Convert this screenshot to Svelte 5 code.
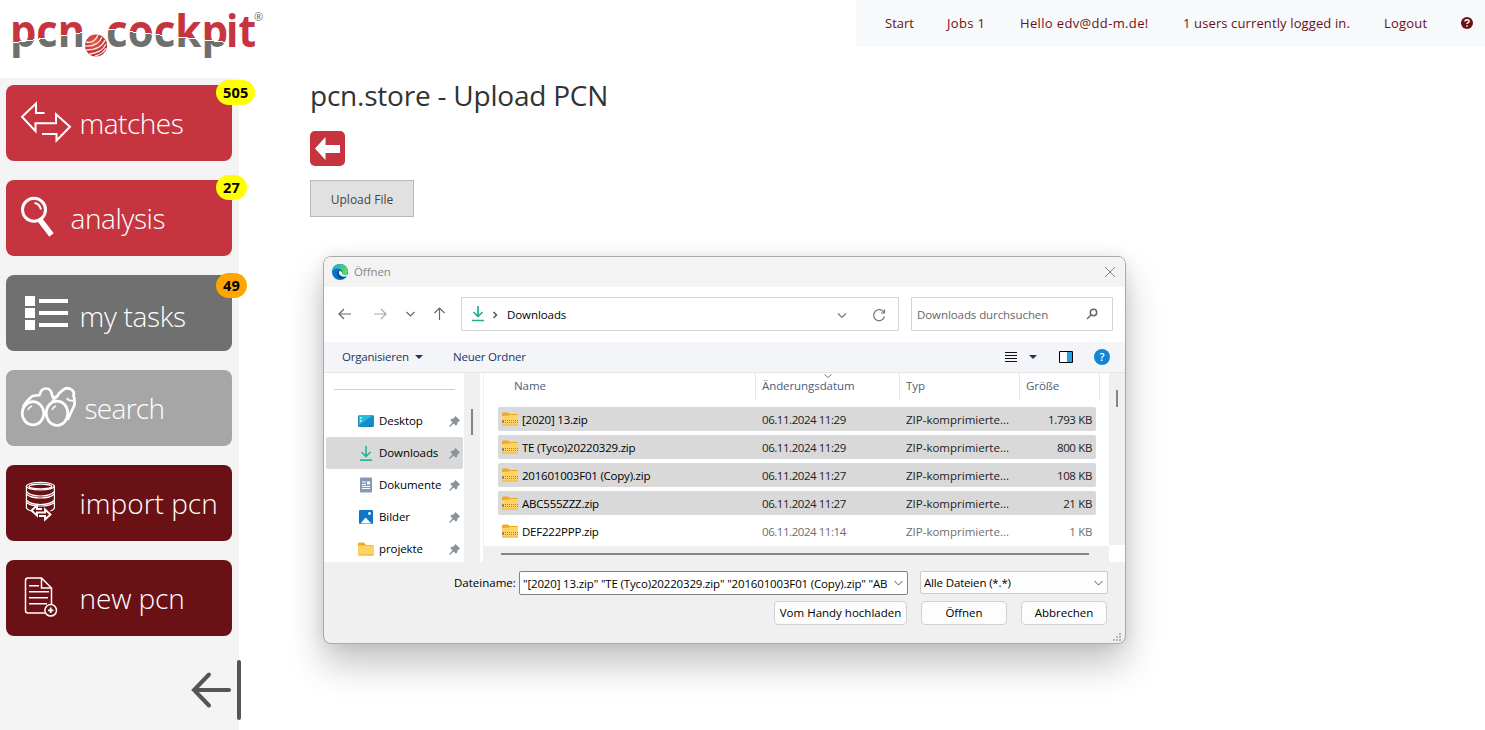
<script>
	const menu = [
		{ name: 'matches', icon: 'arrows', color: 'red', badge: 505, indent: 73.5, spacing: -0.5 },
		{ name: 'analysis', icon: 'lens', color: 'red', badge: 27, indent: 64.5, spacing: -0.4 },
		{ name: 'my tasks', icon: 'tasks', color: 'dark', badge: 49, indent: 73.5, spacing: -0.3 },
		{ name: 'search', icon: 'binoculars', color: 'light', indent: 78.5, spacing: -0.7 },
		{ name: 'import pcn', icon: 'database', color: 'wine', indent: 73.5, spacing: 0 },
		{ name: 'new pcn', icon: 'document', color: 'wine', indent: 73.5, spacing: -0.1 }
	];

	const places = [
		{ name: 'Desktop', icon: 'desktop' },
		{ name: 'Downloads', icon: 'download', active: true },
		{ name: 'Dokumente', icon: 'doc' },
		{ name: 'Bilder', icon: 'image' },
		{ name: 'projekte', icon: 'folder' }
	];

	let files = [
		{ name: '[2020] 13.zip', date: '06.11.2024 11:29', size: '1.793 KB', selected: true },
		{ name: 'TE (Tyco)20220329.zip', date: '06.11.2024 11:29', size: '800 KB', selected: true },
		{ name: '201601003F01 (Copy).zip', date: '06.11.2024 11:27', size: '108 KB', selected: true },
		{ name: 'ABC555ZZZ.zip', date: '06.11.2024 11:27', size: '21 KB', selected: true },
		{ name: 'DEF222PPP.zip', date: '06.11.2024 11:14', size: '1 KB', selected: false }
	];

	function toggle(file) {
		file.selected = !file.selected;
		files = files;
	}
</script>

<header>
	<svg class="logo" width="280" height="78" viewBox="0 0 280 78">
		<defs>
			<linearGradient id="cutLeft" gradientUnits="userSpaceOnUse" x1="44.1" y1="18.2" x2="49.9" y2="57.8">
				<stop offset="48.500%" stop-color="#c5343f" />
				<stop offset="48.500%" stop-color="#fff" />
				<stop offset="51%" stop-color="#fff" />
				<stop offset="51%" stop-color="#6f6f6e" />
			</linearGradient>
			<linearGradient id="cutRight" gradientUnits="userSpaceOnUse" x1="170.2" y1="16.1" x2="165.8" y2="55.9">
				<stop offset="48.500%" stop-color="#c5343f" />
				<stop offset="48.500%" stop-color="#fff" />
				<stop offset="51%" stop-color="#fff" />
				<stop offset="51%" stop-color="#6f6f6e" />
			</linearGradient>
			<radialGradient id="ball" cx="40%" cy="35%" r="65%">
				<stop offset="0%" stop-color="#e0634f" />
				<stop offset="100%" stop-color="#b3202b" />
			</radialGradient>
		</defs>
		<text x="10" y="46.500" textLength="75" lengthAdjust="spacingAndGlyphs" fill="url(#cutLeft)">pcn</text>
		<text x="106" y="46.500" textLength="122" lengthAdjust="spacingAndGlyphs" fill="url(#cutRight)">cockp</text>
		<text x="226" y="46.500" textLength="30" lengthAdjust="spacingAndGlyphs" fill="#c5343f">it</text>
		<circle cx="96" cy="45.500" r="11" fill="url(#ball)" />
		<g fill="none" stroke="#fbe3dc" stroke-width="1.400">
			<path d="M86 42q8 2 12-7" />
			<path d="M85 46q13 1 17-9" />
			<path d="M86 50q15 0 19-10" />
			<path d="M89 54q13-1 17-10" />
			<path d="M95 56q8-2 11-8" />
		</g>
		<text class="reg" x="254" y="21">®</text>
	</svg>
	<nav>
		<a class="start" href="#start">Start</a>
		<a class="jobs" href="#jobs">Jobs 1</a>
		<a class="hello" href="#account">Hello edv@dd-m.de!</a>
		<a class="users" href="#users">1 users currently logged in.</a>
		<a class="logout" href="#logout">Logout</a>
		<svg width="12" height="12" viewBox="0 0 12 12">
			<circle cx="6" cy="6" r="6" fill="#691115" />
			<path d="M4 4.600q0-1.800 2-1.800t2 1.600q0 1-1.200 1.500-.8.4-.8 1.200M6 8.200v1.500" fill="none" stroke="#fff" stroke-width="1.500" />
		</svg>
	</nav>
</header>

<div class="page">
	<aside>
		{#each menu as item}
			<div class="item {item.color}">
				<svg width={item.indent} height="76" fill="none" stroke="#fff" stroke-width="2">
					{#if item.icon === 'arrows'}
						<path d="M38.500 28H30v-9.500L16 31.700l13.500 14.500v-8H50v-9l14 12.500L50.500 55.500V49H36" />
					{:else if item.icon === 'lens'}
						<circle cx="28" cy="29.700" r="11.500" stroke-width="3" />
						<path d="M28.500 23q5 .5 6.500 6.500" stroke-width="2" />
						<path d="M34 40l11.500 15" stroke-width="5.500" />
						<path d="M33 38.500l3 4" stroke-width="3" />
					{:else if item.icon === 'tasks'}
						<path d="M19 26h10M19 38h10M19 50h10" stroke-width="10" />
						<path d="M33 26h29M33 38h29M33 50h29" stroke-width="4" />
					{:else if item.icon === 'binoculars'}
						<g stroke-width="2.700">
							<ellipse cx="27" cy="43.300" rx="10.800" ry="11.600" />
							<ellipse cx="51" cy="43.300" rx="10.800" ry="12.200" />
							<path d="M17 37q4-7 9.500-11l7-1q1.500-6.500 6.500-6.500 5 0 6 6.500l1 2.500 4-1q2-4 6-6.500 4-3.500 9 0 3 2.500 1.500 6l1 3v6L61.500 50" />
							<path d="M46 31l5-4M61 28q1 3 6 2.500" stroke-width="1.800" />
						</g>
						<path d="M22 40q1-3 4-4M46 40q1-3 4-4" stroke-width="1.500" />
					{:else if item.icon === 'database'}
						<g stroke-width="1.200">
							<ellipse cx="34.400" cy="21.200" rx="14" ry="3.800" />
							<ellipse cx="34.400" cy="21.500" rx="11.500" ry="2.400" />
							<path d="M20.400 21v22q1 2 5 3M48.400 21v22q-1 2-4 3M20.400 26.500q4 4.500 14 4.500t14-4.500M20.400 29q4 4 14 4t14-4M20.400 35q4 4.500 14 4.500t14-4.500M20.400 37.500q4 3.500 14 3.500t14-3.500" />
						</g>
						<path d="M36 44h-5v-3.500l-5.500 5 5.500 5V47.500h8v-3l5.500 5-5.500 5V51h-6" stroke-width="1.900" />
					{:else}
						<g stroke-width="1.500">
							<path d="M39 53H22q-2.500 0-2.500-2.500V20.500q0-2.500 2.500-2.500h13.500L45.500 28v16M35.500 18v10h10" />
							<path d="M23 25.700h10M23 31.700h20M23 37.700h19M23 43.700h18" />
							<circle cx="44.700" cy="50.300" r="5.800" />
							<path d="M42 50.300h5.400M44.700 47.600v5.400" stroke-width="1.800" />
						</g>
					{/if}
				</svg>
				<span class="name" class:lower={item.icon === 'tasks'} style="letter-spacing: {item.spacing}px">{item.name}</span>
				{#if item.badge}
					<b class="badge" class:orange={item.icon === 'tasks'}>{item.badge}</b>
				{/if}
			</div>
		{/each}
		<svg class="collapse" width="52" height="62" fill="none" stroke="#555" stroke-width="4" stroke-linecap="round">
			<path d="M39 31H4M19 15.500L4 31l15 15.500" />
			<path d="M49 3v56" />
		</svg>
	</aside>

	<main>
		<h1>pcn.store - Upload PCN</h1>
		<button class="back" aria-label="back">
			<svg width="35" height="35"><path d="M5 17.500L15.500 6v8H30v8H15.500v7z" fill="#fff" /></svg>
		</button>
		<button class="upload">Upload File</button>

		<section class="dialog">
			<div class="title">
				<svg width="16" height="16" viewBox="0 0 16 16">
					<defs>
						<linearGradient id="edgeTop" x1="0" y1="0" x2="1" y2="0.400">
							<stop offset="0" stop-color="#1aa5dc" />
							<stop offset="1" stop-color="#5bdb57" />
						</linearGradient>
					</defs>
					<circle cx="8" cy="8" r="8" fill="#0c71c9" />
					<path d="M0 7.500C.5 3 4 0 8 0c5 0 8 3.500 8 7 0 2.500-2 4-4 4s-3-1-2-2c1-2-1-4.500-4-4.500-3 0-5 1.500-6 3z" fill="url(#edgeTop)" />
					<path d="M6 7q-2 4 1 7 4 2 8-2-5 2-7.500-.5Q6 9.500 7.500 7z" fill="#0b4a91" />
					<path d="M7.500 7q2-.5 2.500 1.500c-.8 1.500.5 2.500 2.500 2.500 1.300 0 2.500-.5 3-1l-.5 2q-4 1.500-6.500-.5T7.500 7z" fill="#f3f3f3" />
				</svg>
				<span>Öffnen</span>
				<svg class="close" width="12" height="12"><path d="M1 1l10 10M11 1L1 11" fill="none" stroke="#888" /></svg>
			</div>

			<div class="address">
				<svg class="history" width="124" height="20" fill="none" stroke="#666" stroke-width="1.200">
					<path d="M16 10H4M9 5l-5 5 5 5" />
					<path d="M39 10h12M46 5l5 5-5 5" stroke="#aaa" />
					<path d="M71.500 8l4 4 4-4" />
					<path d="M104.500 16V4M99.500 9l5-5 5 5" />
				</svg>
				<div class="path">
					<svg width="36" height="20" fill="none">
						<path d="M7 2v10M2.500 8L7 12.500 11.500 8M1 16.500h12" stroke="#21b094" stroke-width="1.700" />
						<path d="M22.500 8l3 3-3 3" stroke="#555" stroke-width="1.500" />
					</svg>
					<span>Downloads</span>
					<svg class="tools" width="52" height="20" fill="none" stroke="#777" stroke-width="1.200">
						<path d="M1 9.500l4 4 4-4" />
						<path d="M47 8.500a5.500 5.500 0 1 0 .5 4M47.500 5.500V9H44" />
					</svg>
				</div>
				<div class="find">
					<span>Downloads durchsuchen</span>
					<svg width="12" height="12" fill="none" stroke="#666"><circle cx="7.500" cy="4.500" r="3.200" stroke-width="1.500" /><path d="M5 7L1 11" stroke-width="1.500" /></svg>
				</div>
			</div>

			<div class="toolbar">
				<span class="organise">Organisieren</span>
				<i class="caret"></i>
				<span class="newfolder">Neuer Ordner</span>
				<svg class="view" width="12" height="12"><path d="M0 1.500h12M0 4.500h12M0 7.500h12M0 10.500h12" stroke="#111" /></svg>
				<i class="caret"></i>
				<svg class="pane" width="14" height="12">
					<path d="M.500.500h13v11H.500z" fill="#fff" stroke="#000" />
					<path d="M8 1h5v10H8z" fill="#22a0e4" />
				</svg>
				<span class="help">?</span>
			</div>

			<div class="body">
				<div class="places">
					<hr />
					{#each places as place}
						<div class="place" class:active={place.active}>
							<svg width="16" height="16" viewBox="0 0 16 16" fill="none">
								{#if place.icon === 'desktop'}
									<rect y="2" width="16" height="12" rx="1.500" fill="#148fc6" />
									<path d="M1 2h14L1 12z" fill="#28bedb" />
									<path d="M2 5h1.500M2 8h1.500" stroke="#fff" stroke-width="1.500" />
									<path d="M11 13h4" stroke="#064979" stroke-dasharray="1 1" />
								{:else if place.icon === 'download'}
									<path d="M8 1v10.500M3.500 7L8 11.500 12.500 7M2 15.200h12" stroke="#2cb693" stroke-width="1.700" />
								{:else if place.icon === 'doc'}
									<rect x="2" y="0.500" width="12" height="15" rx="1" fill="#839bb8" />
									<path d="M4 5h4M4 7.500h4M4 9.500h8M4 11.500h8" stroke="#fff" />
									<path d="M9 4.500h3v3H9z" fill="#fff" />
								{:else if place.icon === 'image'}
									<rect x="1" y="1" width="14" height="14" rx="1.300" fill="#1175c5" />
									<path d="M2.500 14.500L7.500 8.500l6 6z" fill="#fff" />
									<circle cx="11.500" cy="4.500" r="1.400" fill="#fff" />
								{:else}
									<path d="M0 3q0-1.500 1.500-1.500H6L8 4h6.500Q16 4 16 5.500V8H0z" fill="#efa91b" />
									<rect y="4.500" width="16" height="10" rx="1" fill="#ffd264" />
									<path d="M.5 14h15" stroke="#e9b143" />
								{/if}
							</svg>
							<span>{place.name}</span>
							<svg class="pin" width="11" height="11" viewBox="0 0 11 11"><path d="M6.500 0L11 4.500 8.500 6.500 8 9 6.500 9.500 4.700 7.500.800 11 0 10.200 3.500 6.300 1.500 4.500 2 3l2.500-.500z" fill="#89939d" /></svg>
						</div>
					{/each}
				</div>
				<div class="vscroll left"><i></i></div>
				<div class="list">
					<div class="columns">
						<span>Name</span>
						<span>Änderungsdatum
							<svg width="8" height="4"><path d="M.500.500L4 3.500 7.500.500" fill="none" stroke="#777" /></svg>
						</span>
						<span>Typ</span>
						<span>Größe</span>
					</div>
					<div class="rows">
						{#each files as file}
							<!-- svelte-ignore a11y-click-events-have-key-events a11y-no-static-element-interactions -->
							<div class="row" class:selected={file.selected} on:click={() => toggle(file)}>
								<svg width="16" height="14" viewBox="0 0 16 14" fill="none">
									<path d="M0 2q0-1.500 1.500-1.500H6L7.500 2H15q1 0 1 1v4H0z" fill="#f0a81c" />
									<path d="M0 4l7-.5L8 3h8v9.500q0 1-1 1H1q-1 0-1-1z" fill="#ffd366" />
									<path d="M0 13h16" stroke="#eab347" />
									<path d="M1 8.500h15M1 10.500h15" stroke="#8b8678" stroke-dasharray="1 1" />
									<path d="M0 9.500h16" stroke="#d9d4c5" />
									<path d="M1 8v3" stroke="#888" stroke-width="2" />
								</svg>
								<span class="file">{file.name}</span>
								<span class="date">{file.date}</span>
								<span class="type">ZIP-komprimierte...</span>
								<span class="size">{file.size}</span>
							</div>
						{/each}
					</div>
					<div class="hscroll"><i></i></div>
				</div>
				<div class="vscroll right"><i></i></div>
			</div>

			<div class="footer">
				<div class="line">
					<span class="label">Dateiname:</span>
					<div class="filename">
						<span>"[2020] 13.zip" "TE (Tyco)20220329.zip" "201601003F01 (Copy).zip" "AB</span>
						<svg width="9" height="6"><path d="M.500 1l4 4 4-4" fill="none" stroke="#555" /></svg>
					</div>
					<div class="filter">
						<span>Alle Dateien (*.*)</span>
						<svg width="9" height="6"><path d="M.500 1l4 4 4-4" fill="none" stroke="#555" /></svg>
					</div>
				</div>
				<div class="line buttons">
					<button class="phone">Vom Handy hochladen</button>
					<button>Öffnen</button>
					<button>Abbrechen</button>
				</div>
				<svg class="grip" width="9" height="9"><path d="M6 1h2M3 4h2M6 4h2M0 7h2M3 7h2M6 7h2" stroke="#b5b5b5" stroke-width="2" /></svg>
			</div>
		</section>
	</main>
</div>

<style>
	:global(body) {
		overflow: hidden;
		background: #fff;
		font-family: 'Open Sans', 'Noto Sans', sans-serif;
	}
	svg {
		display: block;
		flex: none;
	}
	span,
	a {
		white-space: nowrap;
	}
	button {
		font-family: inherit;
		padding: 0;
	}

	/* header */
	header {
		display: flex;
		justify-content: space-between;
		align-items: flex-start;
		height: 78px;
	}
	.logo text {
		font: 700 44px 'Open Sans', sans-serif;
	}
	.logo .reg {
		font-size: 11px;
		font-weight: 400;
		fill: #666;
	}
	nav {
		display: flex;
		align-items: center;
		box-sizing: border-box;
		width: 629px;
		height: 47px;
		padding-left: 29px;
		background: #f8f9fb;
	}
	nav a {
		flex: none;
		padding-bottom: 2px;
		color: #691115;
		font-size: 13px;
		text-decoration: none;
	}
	nav svg {
		margin-bottom: 1px;
	}
	.start {
		width: 62px;
	}
	.jobs {
		width: 73px;
		letter-spacing: 0.35px;
	}
	.hello {
		width: 163px;
		letter-spacing: 0.35px;
	}
	.users {
		width: 201px;
		letter-spacing: 0.12px;
	}
	.logout {
		width: 77px;
		letter-spacing: 0.2px;
	}

	/* sidebar */
	.page {
		display: flex;
	}
	aside {
		box-sizing: border-box;
		flex: none;
		width: 239px;
		height: 652px;
		padding: 7px 7px 0 6px;
		background: #f4f4f4;
	}
	.item {
		position: relative;
		display: flex;
		height: 76px;
		margin-bottom: 19px;
		border-radius: 8px;
		color: #fff;
	}
	.red {
		background: #c5343f;
	}
	.dark {
		background: #707070;
	}
	.light {
		background: #a6a6a6;
	}
	.wine {
		background: #691115;
	}
	.name {
		font-size: 28px;
		font-weight: 300;
		line-height: 77px;
	}
	.lower {
		line-height: 83px;
	}
	.badge {
		position: absolute;
		top: -5px;
		left: 210px;
		padding: 0 7px;
		border-radius: 13px;
		background: #ff0;
		color: #000;
		font-size: 14.5px;
		letter-spacing: 0.2px;
		line-height: 25px;
	}
	.orange {
		top: -2px;
		background: #ffa500;
	}
	.collapse {
		margin: 24px 0 0 184px;
	}
	.item:nth-last-child(2) {
		margin-bottom: -1px;
	}
	.collapse {
		position: relative;
	}

	/* content */
	main {
		padding-left: 71px;
	}
	h1 {
		margin: -3px 0 0;
		color: #333;
		font-size: 28px;
		font-weight: 400;
		letter-spacing: -0.22px;
		line-height: 40px;
		white-space: nowrap;
	}
	.back {
		display: block;
		width: 35px;
		height: 35px;
		margin-top: 16px;
		border: 0;
		border-radius: 5px;
		background: #c5343f;
	}
	.upload {
		display: block;
		width: 104px;
		height: 37px;
		margin-top: 14px;
		padding-top: 2px;
		border: 1px solid #bababa;
		background: #e1e1e1;
		color: #444;
		font-size: 12px;
	}

	/* file dialog */
	.dialog {
		box-sizing: border-box;
		width: 803px;
		height: 388px;
		margin: 39px 0 0 13px;
		border: 1px solid #aaa;
		border-radius: 8px;
		background: #f0f0f0;
		box-shadow: 0 20px 36px rgba(0, 0, 0, 0.24), 0 0 14px rgba(0, 0, 0, 0.08);
		color: #000;
		font-size: 11.5px;
		letter-spacing: -0.08px;
	}
	.title {
		display: flex;
		align-items: center;
		box-sizing: border-box;
		height: 30px;
		padding: 0 9px 1px 8px;
		border-radius: 7px 7px 0 0;
		background: #f3f3f3;
		color: #888;
	}
	.title span {
		margin-left: 6px;
	}
	.close {
		margin-left: auto;
	}
	.address {
		display: flex;
		align-items: center;
		box-sizing: border-box;
		height: 55px;
		padding-bottom: 1px;
		background: #fff;
	}
	.history {
		margin-left: 11px;
	}
	.path,
	.find {
		display: flex;
		align-items: center;
		box-sizing: border-box;
		height: 34px;
		border: 1px solid #d5d5d5;
	}
	.path {
		width: 438px;
		margin-left: 2px;
		padding: 0 9px 0 9px;
	}
	.tools {
		margin-left: auto;
	}
	.find {
		justify-content: space-between;
		width: 202px;
		margin-left: 12px;
		padding: 0 14px 0 5px;
		color: #666;
	}
	.toolbar {
		display: flex;
		align-items: center;
		height: 30px;
		border-bottom: 1px solid #e5e5e5;
		background: #f4f5f8;
		color: #1c355e;
	}
	.organise,
	.newfolder {
		padding-bottom: 2px;
		letter-spacing: -0.2px;
	}
	.organise {
		width: 73px;
		margin-left: 18px;
	}
	.caret {
		border: 4px solid transparent;
		border-top-color: #1c355e;
		border-bottom: 0;
	}
	.newfolder {
		margin-left: 30px;
	}
	.view {
		margin: 0 12px 0 auto;
	}
	.pane {
		margin: 0 21px 0 22px;
	}
	.help {
		width: 16px;
		height: 16px;
		margin-right: 15px;
		border-radius: 50%;
		background: #1285d4;
		color: #fff;
		font-size: 11px;
		font-weight: 600;
		line-height: 16px;
		text-align: center;
	}

	.body {
		display: flex;
		height: 189px;
		background: #fff;
	}
	.places {
		width: 140px;
		overflow: hidden;
	}
	hr {
		width: 121px;
		height: 1px;
		margin: 16px 0 15px 10px;
		border: 0;
		background: #d0d0d0;
	}
	.place {
		display: flex;
		align-items: center;
		height: 32px;
		margin: 0 1px 0 2px;
		padding: 0 3px 0 32px;
		border-radius: 2px;
	}
	.place span {
		margin-left: 5px;
		padding-bottom: 2px;
	}
	.active {
		background: #d9d9d9;
	}
	.pin {
		margin-left: auto;
	}
	.vscroll {
		flex: none;
		width: 16px;
		background: #f0f0f0;
	}
	.vscroll i {
		display: block;
		width: 2px;
		margin-left: 7px;
		background: #858585;
	}
	.left i {
		height: 26px;
		margin-top: 36px;
	}
	.right {
		height: 172px;
	}
	.right i {
		height: 17px;
		margin-top: 17px;
	}
	.list {
		width: 625px;
		margin-left: 3px;
		border-left: 1px solid #f0f0f0;
	}
	.columns {
		display: grid;
		grid-template-columns: 272px 144px 120px 80px;
		height: 26px;
		color: #4c607a;
		line-height: 26px;
	}
	.columns span {
		position: relative;
		padding-left: 6px;
		border-right: 1px solid #e5e5e5;
	}
	.columns span:first-child {
		padding-left: 30px;
	}
	.columns svg {
		position: absolute;
		top: 1px;
		left: 68px;
	}
	.rows {
		display: flex;
		flex-direction: column;
		gap: 4px;
		height: 139px;
		padding: 8px 12px 0 14px;
	}
	.row {
		display: grid;
		grid-template-columns: 20px 240px 144px 110px 76px;
		align-items: center;
		flex: none;
		width: 594px;
		height: 24px;
		padding-left: 4px;
		border-radius: 2px;
		color: #6d6d6d;
	}
	.selected {
		background: #d9d9d9;
		color: #222;
	}
	.file {
		color: #000;
		letter-spacing: -0.22px;
	}
	.date {
		letter-spacing: -0.45px;
	}
	.type {
		letter-spacing: 0;
	}
	.size {
		letter-spacing: -0.35px;
		text-align: right;
	}
	.hscroll {
		display: flex;
		align-items: center;
		height: 16px;
		background: #f0f0f0;
	}
	.hscroll i {
		width: 588px;
		height: 2px;
		margin-left: 17px;
		background: #858585;
	}

	.footer {
		position: relative;
		height: 81px;
	}
	.line {
		display: flex;
		align-items: flex-start;
		padding-top: 9px;
		line-height: 23px;
	}
	.label {
		width: 65px;
		margin-left: 130px;
		letter-spacing: 0;
	}
	.filename,
	.filter {
		display: flex;
		align-items: center;
		justify-content: space-between;
		box-sizing: border-box;
		height: 24px;
		padding: 0 4px 0 3px;
		border: 1px solid #838383;
		border-radius: 2px;
		background: #fff;
	}
	.filename {
		width: 389px;
		letter-spacing: -0.16px;
	}
	.filter {
		width: 188px;
		height: 23px;
		margin-left: 12px;
		border-color: #ccc;
		background: #fdfdfd;
		letter-spacing: -0.16px;
	}
	.buttons {
		justify-content: flex-end;
		gap: 14px;
		padding: 6px 18px 0 0;
	}
	.buttons button {
		width: 86px;
		height: 24px;
		padding-bottom: 2px;
		border: 1px solid #d0d0d0;
		border-radius: 4px;
		background: #fdfdfd;
		color: #000;
		font-size: 11.5px;
	}
	.buttons .phone {
		width: 133px;
	}
	.grip {
		position: absolute;
		right: 3px;
		bottom: 1px;
	}
</style>
